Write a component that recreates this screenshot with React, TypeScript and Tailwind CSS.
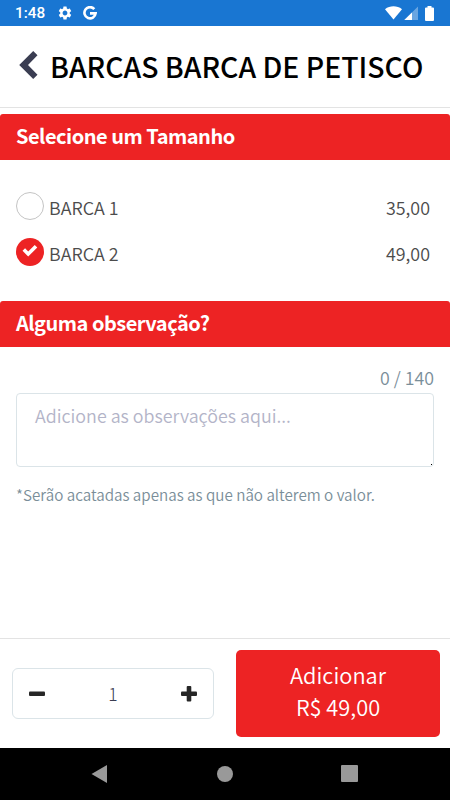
import { useState } from "react";
import { MdSettings } from "react-icons/md";

const sizes = [
  { id: 1, name: "BARCA 1", price: "35,00" },
  { id: 2, name: "BARCA 2", price: "49,00" },
];

const MAX_NOTE = 140;

function StatusBar() {
  return (
    <div className="h-[26px] shrink-0 bg-[#1976d2] flex items-center pl-[15px] pr-[16px] text-white">
      <span className="w-[31px] font-[Roboto] text-[15.300px] font-medium leading-none whitespace-nowrap pt-[2px]">1:48</span>
      <MdSettings size={16} className="ml-[11px]" />
      <svg className="ml-[10px]" width="14" height="14" viewBox="0 0 14 14" fill="none" stroke="currentColor" strokeWidth="2.6">
        <path d="M11.3 3.1A5.6 5.6 0 1 0 12.6 7.4H7" />
      </svg>
      <svg className="ml-auto" width="17" height="14" viewBox="0 0 17 14" fill="currentColor">
        <path d="M0 3.2C5 -.6 12 -.6 17 3.2L8.5 13.4z" />
      </svg>
      <svg className="ml-[2px]" width="14" height="14" viewBox="0 0 14 14" fill="currentColor">
        <path d="M14 .5V14H.3z" opacity=".35" />
        <path d="M8 6.4V14H.3z" />
      </svg>
      <svg className="ml-[7px]" width="9" height="15" viewBox="0 0 9 15" fill="currentColor">
        <path d="M2.500 0h4v1.500H8a1 1 0 0 1 1 1V14a1 1 0 0 1-1 1H1a1 1 0 0 1-1-1V2.500a1 1 0 0 1 1-1h1.500z" />
      </svg>
    </div>
  );
}

function SectionTitle({ children }: { children: string }) {
  return (
    <h2 className="h-[46px] shrink-0 rounded-t-[3px] bg-[#ed2324] px-4 text-[20px] leading-[43px] font-bold tracking-[-0.5px] text-white">
      {children}
    </h2>
  );
}

function NavBar() {
  return (
    <div className="h-[52px] shrink-0 bg-black flex items-center justify-center pr-px pb-px text-[#999999]">
      <svg width="16" height="18" viewBox="0 0 16 18" fill="currentColor">
        <path d="M16 0v18L.5 9z" />
      </svg>
      <div className="ml-[110px] mr-[108px] size-4 rounded-full bg-[#999999]" />
      <div className="size-[17px] rounded-[1px] bg-[#999999]" />
    </div>
  );
}

export default function App() {
  const [selected, setSelected] = useState(2);
  const [note, setNote] = useState("");
  const [qty, setQty] = useState(1);

  return (
    <div className="w-[450px] h-[800px] flex flex-col overflow-hidden bg-white font-['Noto_Sans_CJK_JP','Noto_Sans',sans-serif]">
      <StatusBar />

      <header className="h-[82px] shrink-0 flex items-center border-b border-[#e3e3e3] pl-[19px]">
        <button aria-label="Voltar" className="shrink-0 -mt-1">
          <svg width="20" height="30" viewBox="0 0 20 30" fill="#3a3d52">
            <path d="M14.200 .9L18.500 5.200L9 14.900L18.500 24.700L14.200 29L.2 14.900z" />
          </svg>
        </button>
        <h1 className="ml-[11px] -mt-[2px] text-[28.400px] leading-10 font-medium text-black whitespace-nowrap">BARCAS BARCA DE PETISCO</h1>
      </header>

      <main className="flex-1 flex flex-col pt-[6px]">
        <SectionTitle>Selecione um Tamanho</SectionTitle>
        <div className="h-[141px] shrink-0 pt-[23px] pl-4 pr-[20px] text-[17.900px] text-[#4c4c4c] font-[350]">
          {sizes.map((s) => (
            <button key={s.id} onClick={() => setSelected(s.id)} className="flex w-full h-[46px] items-center">
              {selected === s.id ? (
                <span className="size-7 rounded-full bg-[#ed2324] flex items-center justify-center text-white">
                  <svg className="-mt-1" width="16" height="13" viewBox="0 0 16 13" fill="none" stroke="currentColor" strokeWidth="3.6">
                    <path d="M1.800 5.600L6.200 10L14 2.200" />
                  </svg>
                </span>
              ) : (
                <span className="size-7 rounded-full border border-[#c4c4c4]" />
              )}
              <span className="ml-[5px] pt-[3px]">{s.name}</span>
              <span className="ml-auto pt-[3px]">{s.price}</span>
            </button>
          ))}
        </div>

        <SectionTitle>Alguma observação?</SectionTitle>
        <div className="flex flex-col px-4 pt-[16px]">
          <span className="self-end text-[17.800px] leading-7 font-[350] text-[#7a8e99]">
            {note.length} / {MAX_NOTE}
          </span>
          <div className="relative mt-[2px] h-[74px]">
            <textarea
              value={note}
              maxLength={MAX_NOTE}
              onChange={(e) => setNote(e.target.value)}
              placeholder="Adicione as observações aqui..."
              className="block w-full h-[74px] resize-none rounded-[4px] border border-[#dbe4e8] px-[18px] pt-[7px] text-[17.850px] leading-7 font-[350] text-[#4c4c4c] placeholder:text-[#b3b4c8]"
            />
            <span className="absolute right-[2px] bottom-[2px] size-px bg-black" />
          </div>
          <p className="mt-[15px] text-[15.200px] leading-6 font-[350] text-[#7a8e99]">*Serão acatadas apenas as que não alterem o valor.</p>
        </div>
      </main>

      <footer className="h-[110px] shrink-0 flex items-center border-t border-[#e3e3e3] pl-[12px] pr-[10px]">
        <div className="w-[202px] h-[51px] flex items-center justify-between rounded-[6px] border border-[#dbe4e8] px-4">
          <button aria-label="Diminuir" onClick={() => setQty(Math.max(1, qty - 1))}>
            <svg width="16" height="16" viewBox="0 0 16 16" fill="#262626">
              <rect y="5.500" width="16" height="4.500" rx="1" />
            </svg>
          </button>
          <span className="pt-px text-[17.500px] font-light text-[#3a3d52]">{qty}</span>
          <button aria-label="Aumentar" onClick={() => setQty(qty + 1)}>
            <svg width="16" height="16" viewBox="0 0 16 16" fill="#262626">
              <rect y="5.500" width="16" height="4.500" rx="1" />
              <rect x="5.700" width="4.600" height="15.500" rx="1" />
            </svg>
          </button>
        </div>
        <button className="ml-auto w-[204px] h-[87px] rounded-[5px] bg-[#ed2324] pb-[6px] text-[21.800px] leading-8 font-[350] text-white">
          Adicionar
          <br />
          R$ 49,00
        </button>
      </footer>

      <NavBar />
    </div>
  );
}
